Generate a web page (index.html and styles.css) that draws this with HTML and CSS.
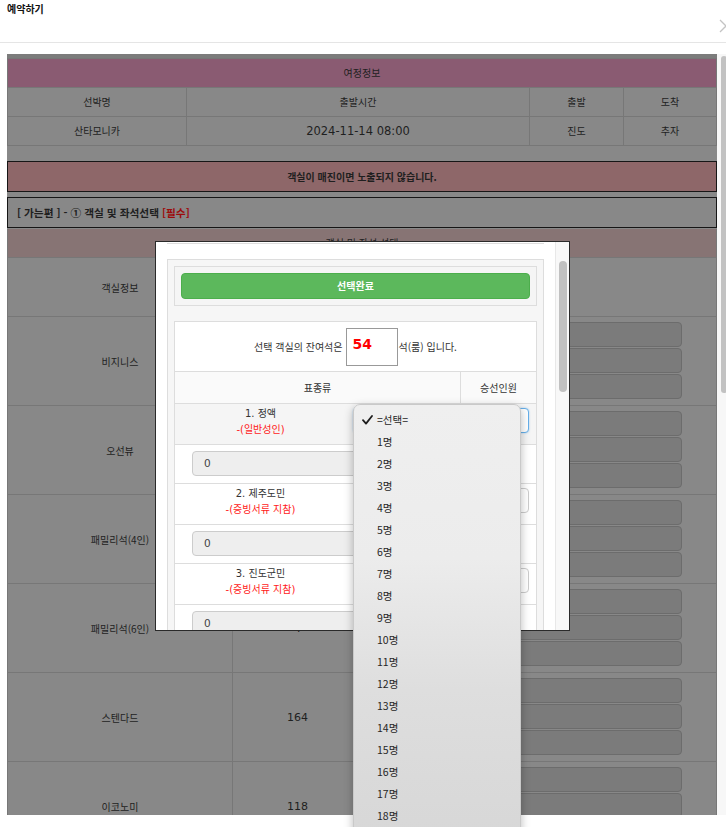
FILE: index.html
```html
<!DOCTYPE html>
<html lang="ko">
<head>
<meta charset="utf-8">
<title>예약하기</title>
<link rel="stylesheet" href="styles.css">
</head>
<body>
<div class="dialog">
  <header class="dlg-head">
    <h1 class="dlg-title">예약하기</h1>
    <svg class="dlg-close" width="14" height="14" viewBox="0 0 14 14" aria-label="닫기"><path d="M1 1 L13 13 M13 1 L1 13" stroke="#c4c4c4" stroke-width="1.3" fill="none"/></svg>
  </header>
  <div class="dlg-body">
    <div class="frame">
      <div class="topband"></div>
      <div class="trip">
        <div class="trip-title">여정정보</div>
        <div class="trip-row"><div>선박명</div><div>출발시간</div><div>출발</div><div>도착</div></div>
        <div class="trip-row"><div>산타모니카</div><div class="num">2024-11-14 08:00</div><div>진도</div><div>추자</div></div>
      </div>
      <div class="notice">객실이 매진이면 노출되지 않습니다.</div>
      <div class="section">[ 가는편 ] - ① 객실 및 좌석선택 <span class="req">[필수]</span></div>
      <div class="rooms">
        <div class="rooms-title">객실 및 좌석 선택</div>
        <div class="room head"><div class="c1">객실정보</div><div class="c2">잔여석</div><div class="c3">좌석</div></div>
        <div class="room"><div class="c1">비지니스</div><div class="c2 num">12</div><div class="c3 inputs"><span class="inp"></span><span class="inp"></span><span class="inp"></span></div></div>
        <div class="room"><div class="c1">오선뷰</div><div class="c2 num">20</div><div class="c3 inputs"><span class="inp"></span><span class="inp"></span><span class="inp"></span></div></div>
        <div class="room"><div class="c1">패밀리석(4인)</div><div class="c2 num">8</div><div class="c3 inputs"><span class="inp"></span><span class="inp"></span><span class="inp"></span></div></div>
        <div class="room"><div class="c1">패밀리석(6인)</div><div class="c2 num">4</div><div class="c3 inputs"><span class="inp"></span><span class="inp"></span><span class="inp"></span></div></div>
        <div class="room"><div class="c1">스텐다드</div><div class="c2 num">164</div><div class="c3 inputs"><span class="inp"></span><span class="inp"></span><span class="inp"></span></div></div>
        <div class="room"><div class="c1">이코노미</div><div class="c2 num">118</div><div class="c3 inputs"><span class="inp"></span><span class="inp"></span><span class="inp"></span></div></div>
      </div>

      <div class="modal">
        <div class="m-content">
          <div class="m-cut"></div>
          <div class="m-panel">
            <div class="m-btnbox"><div class="m-btn">선택완료</div></div>
            <div class="m-table">
              <div class="m-remain">
                <span>선택 객실의 잔여석은</span>
                <span class="m-count">54</span>
                <span>석(룸) 입니다.</span>
              </div>
              <div class="m-head"><div>표종류</div><div>승선인원</div></div>
              <div class="m-name sel">
                <div class="m-label">1. 정액<br><span class="red">-(일반성인)</span></div>
                <div class="m-selcell"><span class="m-select focus"></span></div>
              </div>
              <div class="m-inrow"><span class="m-input">0</span></div>
              <div class="m-name">
                <div class="m-label">2. 제주도민<br><span class="red">-(증빙서류 지참)</span></div>
                <div class="m-selcell"><span class="m-select"></span></div>
              </div>
              <div class="m-inrow"><span class="m-input">0</span></div>
              <div class="m-name">
                <div class="m-label">3. 진도군민<br><span class="red">-(증빙서류 지참)</span></div>
                <div class="m-selcell"><span class="m-select"></span></div>
              </div>
              <div class="m-inrow"><span class="m-input">0</span></div>
            </div>
          </div>
        </div>
        <div class="m-scroll"><span class="m-thumb"></span></div>
      </div>
    </div>
    <div class="outer-scroll"><span class="outer-thumb"></span></div>
  </div>
</div>

<ul class="dropdown">
  <li class="checked"><svg class="check" width="11" height="10" viewBox="0 0 11 10"><path d="M1 5.2 L4 8.6 L10 1" stroke="#1e1e1e" stroke-width="1.8" fill="none" stroke-linecap="round" stroke-linejoin="round"/></svg>=선택=</li>
  <li>1명</li><li>2명</li><li>3명</li><li>4명</li><li>5명</li><li>6명</li>
  <li>7명</li><li>8명</li><li>9명</li><li>10명</li><li>11명</li><li>12명</li>
  <li>13명</li><li>14명</li><li>15명</li><li>16명</li><li>17명</li><li>18명</li>
</ul>
</body>
</html>
```

FILE: styles.css
```css
* { box-sizing: border-box; margin: 0; padding: 0; }
html, body { width: 726px; height: 827px; overflow: hidden; background: #fff; }
body {
  position: relative;
  font-family: "Noto Sans CJK KR", "DejaVu Sans", sans-serif;
  font-size: 10px;
  color: #1f1f1f;
}
.num { font-family: "DejaVu Sans", "Noto Sans CJK KR", sans-serif; }

/* dialog header */
.dlg-head {
  height: 43px;
  border-bottom: 1px solid #e5e5e5;
  display: flex;
  justify-content: space-between;
  align-items: flex-start;
}
.dlg-title { font-size: 10px; font-weight: bold; color: #111; padding: 1px 0 0 7px; }
.dlg-close { display: block; margin: 19px -7px 0 0; flex: none; }

.dlg-body { display: flex; align-items: flex-start; padding-top: 11px; }

/* iframe-like page area, dimmed */
.frame {
  position: relative;
  margin-left: 7px;
  width: 710px;
  height: 761px;
  overflow: hidden;
  background: #888;
}
.topband { height: 4px; background: #7c7c7c; }

.trip { border: 1px solid #777; border-bottom: 0; }
.trip-title {
  height: 29px; line-height: 28px; text-align: center;
  background: #8a5b72; border-bottom: 1px solid #777;
}
.trip-row {
  display: grid;
  grid-template-columns: 178px 343px 94px 1fr;
  height: 29px;
  border-bottom: 1px solid #777;
}
.trip-row > div { line-height: 28px; text-align: center; }
.trip-row > div + div { border-left: 1px solid #777; }
.trip-row .num { font-size: 11.5px; }

.notice {
  margin-top: 15px; height: 31px;
  border: 1px solid #161616; background: #8e6769;
  font-weight: bold; text-align: center; line-height: 29px;
}
.section {
  margin-top: 5px; height: 31px;
  border: 1px solid #161616; background: #888;
  font-weight: bold; line-height: 29px; padding-left: 9px;
  font-size: 10.7px;
}
.req { color: #9c0c0c; }

.rooms { margin-top: 1px; border-left: 1px solid #777; border-right: 1px solid #777; }
.rooms-title {
  height: 29px; line-height: 28px; text-align: center;
  background: #877474; border-bottom: 1px solid #777;
}
.room {
  display: grid;
  grid-template-columns: 224px 130px 1fr;
  height: 89px;
  border-bottom: 1px solid #777;
}
.room.head { height: 59px; }
.room > div { display: flex; align-items: center; justify-content: center; }
.room > div + div { border-left: 1px solid #777; }
.room .c2 { font-size: 11px; }
.room .inputs {
  flex-direction: column; align-items: flex-start; justify-content: flex-start;
  padding: 5px 0 0 7px; gap: 1px;
}
.inp {
  display: block; width: 312px; height: 25px;
  background: #7b7b7b; border: 1px solid #6c6c6c; border-radius: 4px;
}

/* modal */
.modal {
  position: absolute; left: 148px; top: 187px;
  width: 415px; height: 390px;
  border: 1px solid #2a2a2a; background: #fff;
  display: flex; overflow: hidden;
  color: #333;
}
.m-content { flex: 1; padding: 0 11px; }
.m-scroll {
  width: 14px; border-left: 1px solid #e8e8e8; background: #f8f8f8;
  padding: 19px 0 0 3px;
}
.m-thumb { display: block; width: 8px; height: 131px; border-radius: 4px; background: #c1c1c1; }

.m-cut { height: 2px; border-bottom: 1px solid #ddd; }
.m-panel { margin-top: 15px; border: 1px solid #ddd; background: #f6f6f6; padding: 6px; }
.m-btnbox { border: 1px solid #ddd; background: #f5f5f5; padding: 6px; }
.m-btn {
  height: 26px; line-height: 24px; text-align: center;
  background: #5cb85c; border: 1px solid #4cae4c; border-radius: 4px;
  color: #fff; font-weight: bold;
}
.m-table { margin-top: 15px; border: 1px solid #ddd; background: #fff; }
.m-remain {
  height: 50px; border-bottom: 1px solid #ddd;
  display: flex; align-items: center; justify-content: center;
}
.m-count {
  width: 52px; height: 38px; margin: 0 1px 0 3px;
  border: 1px solid #999; background: #fff;
  color: #f00; font-weight: bold; font-size: 14px;
  font-family: "DejaVu Sans", sans-serif;
  padding-left: 6px; line-height: 30px;
}
.m-head {
  display: grid; grid-template-columns: 285px 1fr;
  height: 32px; border-bottom: 1px solid #ddd; background: #fafafa;
}
.m-head > div { text-align: center; line-height: 31px; }
.m-head > div + div { border-left: 1px solid #ddd; }

.m-name {
  display: grid; grid-template-columns: 171px 1fr;
  height: 41px; border-bottom: 1px solid #ddd;
}
.m-name.sel { background: #f5f5f5; }
.m-label { text-align: center; line-height: 16px; padding-top: 2px; font-family: "DejaVu Sans", "Noto Sans CJK KR", sans-serif; font-size: 10px; }
.red { color: #ff1a1a; }
.m-selcell { padding: 4px 7px 0; }
.m-select {
  display: block; height: 25px;
  border: 1px solid #ccc; border-radius: 4px; background: #fff;
}
.m-select.focus { border-color: #66afe9; box-shadow: 0 0 2px rgba(102,175,233,.6); }
.m-inrow { height: 39px; border-bottom: 1px solid #ddd; padding: 6px 0 0 17px; }
.m-input {
  display: block; width: 300px; height: 25px;
  background: #eee; border: 1px solid #ccc; border-radius: 4px;
  padding-left: 11px; line-height: 23px; color: #444;
  font-family: "DejaVu Sans", sans-serif; font-size: 10.5px;
}

/* outer scrollbar */
.outer-scroll { width: 9px; height: 761px; background: #f7f7f7; padding: 2px 0 0 4px; }
.outer-thumb { display: block; width: 6px; height: 337px; border-radius: 3px; background: #c2c2c2; }

/* native select popup */
.dropdown {
  position: absolute; left: 353px; top: 404px;
  width: 168px; height: 440px;
  list-style: none;
  padding-top: 4px;
  border: 1px solid #c9c9c9; border-radius: 7px;
  background: linear-gradient(180deg, #efefef 0%, #ececec 35%, #dedede 65%, #d7d7d7 100%);
  box-shadow: 0 3px 10px rgba(0,0,0,.28);
  font-size: 10.5px; color: #262626;
}
.dropdown li { height: 22px; line-height: 22px; padding-left: 23px; }
.dropdown .check { display: inline-block; vertical-align: -1px; margin: 0 4px 0 -15px; }
```
